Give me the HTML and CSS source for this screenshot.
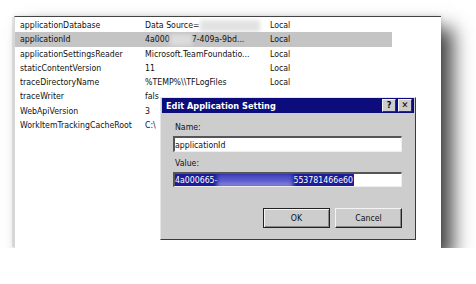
FILE: index.html
```html
<!DOCTYPE html>
<html lang="en">
<head>
    <meta charset="UTF-8">
    <title>Edit Application Setting</title>
    <link rel="stylesheet" href="styles.css">
</head>
<body>
    <div class="panel">
        <div class="list">
            <div class="row">
                <span>applicationDatabase</span>
                <span>Data Source=<span class="smudge light"></span></span>
                <span>Local</span>
            </div>
            <div class="row selected">
                <span>applicationId</span>
                <span>4a000<span class="smudge pale"></span>7-409a-9bd...</span>
                <span>Local</span>
            </div>
            <div class="row">
                <span>applicationSettingsReader</span>
                <span>Microsoft.TeamFoundatio...</span>
                <span>Local</span>
            </div>
            <div class="row">
                <span>staticContentVersion</span>
                <span>11</span>
                <span>Local</span>
            </div>
            <div class="row">
                <span>traceDirectoryName</span>
                <span>%TEMP%\\TFLogFiles</span>
                <span>Local</span>
            </div>
            <div class="row">
                <span>traceWriter</span>
                <span>fals</span>
                <span></span>
            </div>
            <div class="row">
                <span>WebApiVersion</span>
                <span>3</span>
                <span></span>
            </div>
            <div class="row">
                <span>WorkItemTrackingCacheRoot</span>
                <span>C:\</span>
                <span></span>
            </div>
        </div>

        <div class="dialog">
            <div class="titlebar">
                <span class="title">Edit Application Setting</span>
                <span class="caption-btns">
                    <span class="cap-btn">?</span>
                    <span class="cap-btn">&#x2715;</span>
                </span>
            </div>
            <div class="dialog-body">
                <label class="field-label">Name:</label>
                <div class="field name-field">applicationId</div>
                <label class="field-label value-label">Value:</label>
                <div class="field value-field">
                    <span class="selection">4a000665-<span class="smudge blue"></span>553781466e60</span>
                </div>
                <div class="buttons">
                    <button class="btn default">OK</button>
                    <button class="btn">Cancel</button>
                </div>
            </div>
        </div>
    </div>
</body>
</html>
```

FILE: styles.css
```css
body {
    margin: 0;
    background: #fff;
    font-family: "DejaVu Sans Condensed", "DejaVu Sans", sans-serif;
    font-stretch: condensed;
    font-size: 8.7px;
    color: #111;
}
.panel {
    position: relative;
    margin: 16px 0 0 14px;
    width: 426px;
    height: 231px;
    background: #fff;
    border-top: 1px solid #444;
    border-left: 1px solid #d8d8d8;
    box-shadow: 12px 12px 18px rgba(0, 0, 0, 0.72), -3px 0 0 -1px #e4e4e4, 0 0 5px rgba(0, 0, 0, 0.12);
}
.list {
    padding-top: 1px;
}
.row {
    display: grid;
    grid-template-columns: 125px 125px 122px;
    padding-left: 5px;
    width: 372px;
    height: 14.3px;
    line-height: 14.3px;
    white-space: nowrap;
}
.row span {
    overflow: hidden;
}
.row.selected {
    background: #c4c4c4;
}
.smudge {
    display: inline-block;
    vertical-align: middle;
    filter: blur(2px);
}
.smudge.light {
    width: 60px;
    height: 12px;
    background: #e2e2e2;
}
.smudge.pale {
    width: 22px;
    height: 12px;
    background: #dcdcdc;
}
.smudge.blue {
    width: 76px;
    height: 13px;
    background: linear-gradient(#4a4ac4, #6060d0 70%, #d8d8f0);
}
.dialog {
    position: absolute;
    left: 145px;
    top: 80px;
    width: 254px;
    height: 141px;
    background: #cdcdcd;
    border: 1px solid;
    border-color: #e6e6e6 #3a3a3a #3a3a3a #e6e6e6;
}
.titlebar {
    display: flex;
    justify-content: space-between;
    align-items: center;
    height: 15px;
    margin: 0 1px;
    padding-left: 4px;
    background: #0c0c7c;
}
.title {
    color: #fff;
    font-weight: bold;
    font-size: 9.1px;
}
.caption-btns {
    display: flex;
    gap: 2px;
    padding-right: 2px;
}
.cap-btn {
    width: 12px;
    height: 11px;
    line-height: 11px;
    text-align: center;
    background: #cdcdcd;
    border: 1px solid;
    border-color: #f4f4f4 #333 #333 #f4f4f4;
    font-weight: bold;
    font-size: 9px;
    color: #000;
}
.dialog-body {
    display: flex;
    flex-direction: column;
    padding: 9px 13px 0 12px;
}
.field-label {
    line-height: 11px;
    margin-left: 2px;
}
.value-label {
    margin-top: 6px;
}
.field {
    margin-top: 3px;
    height: 14px;
    line-height: 14px;
    background: #fff;
    border-top: 2px solid #555;
    border-left: 2px solid #555;
    border-right: 1px solid #eee;
    border-bottom: 1px solid #eee;
    white-space: nowrap;
    overflow: hidden;
}
.name-field {
    height: 13px;
}
.value-field {
    height: 12px;
    line-height: 12px;
}
.selection {
    display: inline-block;
    background: #1c1c9c;
    color: #fff;
    padding-right: 1px;
}
.buttons {
    display: flex;
    justify-content: flex-end;
    gap: 5px;
    margin-top: 21px;
}
.btn {
    width: 67px;
    height: 20px;
    padding: 0;
    background: #cdcdcd;
    font: inherit;
    color: #111;
    border: 1px solid;
    border-color: #f4f4f4 #222 #222 #f4f4f4;
    box-shadow: inset -1px -1px 0 #888;
}
.btn.default {
    border-color: #222;
    box-shadow: inset 1px 1px 0 #f4f4f4, inset -1px -1px 0 #888;
}
```
